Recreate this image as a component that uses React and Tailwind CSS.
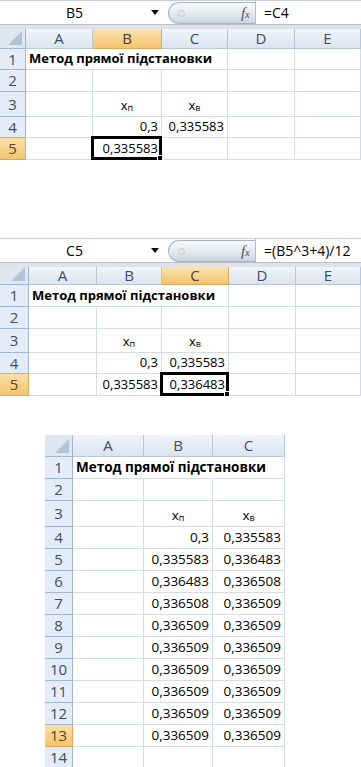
import React from "react";

const GRID = "border-[#d6dce6]";

function FormulaBar({ name, formula, nameW }) {
  return (
    <div className="flex flex-col w-full">
      <div className="flex h-[24px] w-full border-t border-[#c5ccd5] bg-white">
        <div className="flex items-center" style={{ width: nameW }}>
          <span className="flex-1 text-center text-[14px] text-black">{name}</span>
          <span className="w-[12px] flex justify-center">
            <svg width="8" height="5" viewBox="0 0 8 5">
              <polygon points="0,0 8,0 4,5" fill="#111" />
            </svg>
          </span>
        </div>
        <div className="w-[7px]" />
        <div className="relative flex items-center w-[87px] h-[22px] mt-[1px] rounded-l-full border border-r-0 border-[#aab4c0] bg-linear-to-b from-[#f7f9fb] via-[#e6ebf1] to-[#cbd4de]">
          <span className="ml-[9px] w-[7px] h-[7px] rounded-full border border-[#bfc8d2] bg-[#e3e8ee]" />
          <span className="ml-auto mr-[5px] font-['Liberation_Serif',serif] italic text-[15px] text-[#4b525c] leading-none">
            f<span className="text-[11px]">x</span>
          </span>
        </div>
        <div className="flex-1 flex items-center border-l border-[#b4bdc8] pl-[8px] text-[14px] text-black">
          {formula}
        </div>
      </div>
      <div className="h-[5px] w-full bg-[#dfe3e8] border-t border-[#b9c1cb]" />
    </div>
  );
}

function HeaderRow({ rowHdrW, cols, selCol, h }) {
  return (
    <div className="flex" style={{ height: h }}>
      <div
        className="relative border-r border-b border-[#9eb6ce] bg-[#dfe7f1]"
        style={{ width: rowHdrW }}
      >
        <svg className="absolute right-[3px] bottom-[3px]" width="14" height="14" viewBox="0 0 14 14">
          <polygon points="14,0 14,14 0,14" fill="#b3c3d7" />
        </svg>
      </div>
      {cols.map((c) => (
        <div
          key={c.l}
          className={
            "flex items-center justify-center border-r border-b text-[15px] " +
            (c.l === selCol
              ? "bg-linear-to-b from-[#fbe2b0] to-[#f3c46e] border-[#e3a851] text-[#4a4030]"
              : "bg-linear-to-b from-[#f1f5fa] to-[#dbe4ef] border-[#b6c7da] text-[#3f4d63]")
          }
          style={{ width: c.w }}
        >
          {c.l}
        </div>
      ))}
    </div>
  );
}

function Cell({ w, cell }) {
  const c = cell || {};
  const align =
    c.align === "right" ? "justify-end pr-[3px]" : c.align === "center" ? "justify-center" : "justify-start pl-[3px]";
  return (
    <div
      className={
        "relative flex items-end pb-[2px] border-b " +
        GRID +
        (c.noRight ? "" : " border-r") +
        " " +
        align
      }
      style={{ width: w }}
    >
      {c.t && (
        <span
          className={
            "relative z-10 whitespace-nowrap leading-[18px] text-black " + (c.bold ? "font-bold" : "")
          }
        >
          {c.t}
        </span>
      )}
      {c.sel && (
        <div className="absolute -left-[2px] -top-[2px] -right-[1px] -bottom-[1px] border-[3px] border-black z-20">
          <div className="absolute -right-[4px] -bottom-[4px] w-[6px] h-[6px] bg-black border border-white" />
        </div>
      )}
    </div>
  );
}

function Sheet({ rowHdrW, cols, rows, selCol, selRow, headerH, fontSize }) {
  return (
    <div className={"flex flex-col font-['Open_Sans',sans-serif] " + fontSize}>
      <HeaderRow rowHdrW={rowHdrW} cols={cols} selCol={selCol} h={headerH} />
      {rows.map((r) => (
        <div key={r.n} className="flex" style={{ height: r.h }}>
          <div
            className={
              "flex items-center justify-center border-r border-b text-[15px] " +
              (r.n === selRow
                ? "bg-linear-to-b from-[#fbdfa6] to-[#f3c46e] border-[#e3a851] text-[#5a4624]"
                : "bg-[#e4ecf7] border-[#9eb6ce] text-[#3f4d63]")
            }
            style={{ width: rowHdrW }}
          >
            {r.n}
          </div>
          {cols.map((c, i) => (
            <Cell key={c.l} w={c.w} cell={r.cells && r.cells[i]} />
          ))}
        </div>
      ))}
    </div>
  );
}

const xp = (
  <>
    x<sub className="text-[9px] relative -bottom-[1px]">п</sub>
  </>
);
const xv = (
  <>
    x<sub className="text-[9px] relative -bottom-[1px]">в</sub>
  </>
);
const title = { t: "Метод прямої підстановки", bold: true, noRight: true };
const R = (t) => ({ t, align: "right" });

const cols1 = [
  { l: "A", w: 67 },
  { l: "B", w: 69 },
  { l: "C", w: 66 },
  { l: "D", w: 67 },
  { l: "E", w: 66 },
];
const rows1 = [
  { n: 1, h: 21, cells: [title, { noRight: true }] },
  { n: 2, h: 22 },
  { n: 3, h: 25, cells: [null, { t: xp, align: "center" }, { t: xv, align: "center" }] },
  { n: 4, h: 21, cells: [null, R("0,3"), R("0,335583")] },
  { n: 5, h: 22, cells: [null, { ...R("0,335583"), sel: true }] },
];

const cols2 = [
  { l: "A", w: 68 },
  { l: "B", w: 65 },
  { l: "C", w: 67 },
  { l: "D", w: 67 },
  { l: "E", w: 65 },
];
const rows2 = [
  { n: 1, h: 22, cells: [title, { noRight: true }] },
  { n: 2, h: 22 },
  { n: 3, h: 24, cells: [null, { t: xp, align: "center" }, { t: xv, align: "center" }] },
  { n: 4, h: 21, cells: [null, R("0,3"), R("0,335583")] },
  { n: 5, h: 22, cells: [null, R("0,335583"), { ...R("0,336483"), sel: true }] },
];

const cols3 = [
  { l: "A", w: 71 },
  { l: "B", w: 69 },
  { l: "C", w: 72 },
];
const vals3 = [
  ["0,3", "0,335583"],
  ["0,335583", "0,336483"],
  ["0,336483", "0,336508"],
  ["0,336508", "0,336509"],
  ["0,336509", "0,336509"],
  ["0,336509", "0,336509"],
  ["0,336509", "0,336509"],
  ["0,336509", "0,336509"],
  ["0,336509", "0,336509"],
  ["0,336509", "0,336509"],
];
const rows3 = [
  { n: 1, h: 22, cells: [title, { noRight: true }] },
  { n: 2, h: 22 },
  { n: 3, h: 26, cells: [null, { t: xp, align: "center" }, { t: xv, align: "center" }] },
  ...vals3.map((v, i) => ({ n: i + 4, h: 22, cells: [null, R(v[0]), R(v[1])] })),
  { n: 14, h: 22 },
];

export default function App() {
  return (
    <div className="w-[361px] h-[767px] bg-white overflow-hidden font-['Open_Sans',sans-serif]">
      <FormulaBar name="B5" formula="=C4" nameW={161} />
      <Sheet rowHdrW={26} cols={cols1} rows={rows1} selCol="B" selRow={5} headerH={20} fontSize="text-[13px]" />

      <div className="mt-[78px]">
        <FormulaBar name="C5" formula="=(B5^3+4)/12" nameW={161} />
        <Sheet rowHdrW={29} cols={cols2} rows={rows2} selCol="C" selRow={5} headerH={18} fontSize="text-[13px]" />
      </div>

      <div className="mt-[39px] ml-[45px]">
        <Sheet rowHdrW={28} cols={cols3} rows={rows3} selRow={13} headerH={22} fontSize="text-[13.5px]" />
      </div>
    </div>
  );
}
